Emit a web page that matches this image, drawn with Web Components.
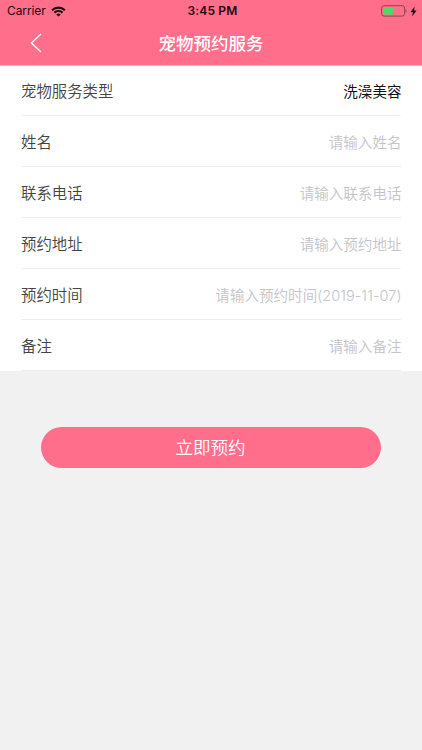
<!DOCTYPE html>
<html lang="zh-CN">
<head>
<meta charset="UTF-8">
<meta name="viewport" content="width=device-width, initial-scale=1">
<title>宠物预约服务</title>
<style>
    body {
        margin: 0;
        background: #f1f1f1;
        font-family: Inter, "Noto Sans CJK SC", sans-serif;
    }
</style>
</head>
<body>
<booking-page></booking-page>

<script>
class StatusBar extends HTMLElement {
    constructor() {
        super();
        this.attachShadow({mode: "open"}).innerHTML = `
        <style>
        :host {
            display: grid;
            grid-template-columns: 1fr auto 1fr;
            align-items: center;
            height: 22px;
            padding: 0 5px 0 7px;
            box-sizing: border-box;
            color: #1c0c10;
            font-size: 12px;
            line-height: 22px;
        }

        .left, .right {
            display: flex;
            align-items: center;
        }

        .left {
            gap: 5px;
            letter-spacing: -0.1px;
        }

        .right {
            justify-content: flex-end;
            gap: 3px;
        }

        .time {
            padding-left: 1px;
            font-weight: 600;
            letter-spacing: 0.15px;
        }

        svg {
            display: block;
        }
        </style>

        <div class="left">
            <span>Carrier</span>
            <svg width="15" height="11" viewBox="0 0 15 11" fill="none" stroke="#1c0c10" stroke-width="2.1">
                <path d="M1 4.2C4.7 .7 10.3 .7 14 4.2"/>
                <path d="M3.4 6.6C5.7 4.5 9.3 4.5 11.6 6.6"/>
                <path d="M7.5 10.6L5.2 8.4C6.5 7.3 8.5 7.3 9.8 8.4Z" fill="#1c0c10" stroke="none"/>
            </svg>
        </div>
        <span class="time">3:45 PM</span>
        <div class="right">
            <svg width="26" height="12" viewBox="0 0 26 12">
                <rect x=".6" y=".7" width="23" height="10.4" rx="2.4" fill="none" stroke="#8d4452"/>
                <rect x="2.2" y="2.3" width="10.3" height="7.2" rx=".8" fill="#4cd964"/>
                <path d="M24.6 4v4c1.4-.6 1.4-3.4 0-4z" fill="#8d4452"/>
            </svg>
            <svg width="7" height="11" viewBox="0 0 7 11">
                <path d="M4.6 .4L.4 6.2H3L2 10.6L6.6 4.6H4Z" fill="#1c0c10"/>
            </svg>
        </div>
        `;
    }
}

class NavBar extends HTMLElement {
    constructor() {
        super();
        this.attachShadow({mode: "open"}).innerHTML = `
        <style>
        :host {
            display: grid;
            grid-template-columns: 60px 1fr 60px;
            align-items: center;
            height: 43px;
            box-sizing: border-box;
            padding-bottom: 1px;
            color: white;
        }

        svg {
            display: block;
            margin-left: 30px;
        }

        h1 {
            margin: 0;
            padding-top: 1px;
            font-size: 17.5px;
            line-height: 26px;
            font-weight: 500;
            text-align: center;
        }
        </style>

        <svg width="12" height="20" viewBox="0 0 12 20" fill="none" stroke="white" stroke-width="1.4">
            <path d="M11 1L1.4 10L11 19"/>
        </svg>
        <h1><slot></slot></h1>
        `;
    }
}

class FormRow extends HTMLElement {
    connectedCallback() {
        this.attachShadow({mode: "open"}).innerHTML = `
        <style>
        :host {
            display: flex;
            justify-content: space-between;
            align-items: center;
            height: 51px;
            box-sizing: border-box;
            padding-top: 3px;
            border-bottom: 1px solid #eeeeee;
            line-height: 24px;
        }

        :host(:first-child) {
            height: 50px;
        }

        .label {
            color: #444444;
            font-size: 15.4px;
            font-weight: 350;
        }

        .value {
            margin-right: -0.5px;
            color: #c4c4ca;
            font-size: 14.5px;
            font-weight: 350;
            letter-spacing: 0.05px;
        }

        .value.filled {
            color: #111111;
            font-weight: 400;
        }
        </style>

        <span class="label">${this.getAttribute("label")}</span>
        <span class="value ${this.hasAttribute("filled") ? "filled" : ""}"><slot></slot></span>
        `;
    }
}

class SubmitButton extends HTMLElement {
    constructor() {
        super();
        this.attachShadow({mode: "open"}).innerHTML = `
        <style>
        :host {
            display: block;
            margin: 56px 41px 0;
        }

        button {
            display: block;
            width: 100%;
            height: 41px;
            padding: 0 1px 2px 0;
            border: 0;
            border-radius: 21px;
            background: #ff6e8b;
            color: white;
            font: inherit;
            font-size: 17.5px;
            font-weight: 350;
        }
        </style>

        <button type="button"><slot></slot></button>
        `;
    }
}

class BookingPage extends HTMLElement {
    constructor() {
        super();
        this.attachShadow({mode: "open"}).innerHTML = `
        <style>
        :host {
            display: block;
            min-height: 100vh;
        }

        header {
            background: #ff6e8b;
            border-bottom: 1px solid #ffb0c0;
        }

        .form {
            padding: 0 21px;
            background: white;
        }
        </style>

        <header>
            <status-bar></status-bar>
            <nav-bar>宠物预约服务</nav-bar>
        </header>
        <div class="form">
            <form-row label="宠物服务类型" filled>洗澡美容</form-row>
            <form-row label="姓名">请输入姓名</form-row>
            <form-row label="联系电话">请输入联系电话</form-row>
            <form-row label="预约地址">请输入预约地址</form-row>
            <form-row label="预约时间">请输入预约时间(2019-11-07)</form-row>
            <form-row label="备注">请输入备注</form-row>
        </div>
        <submit-button>立即预约</submit-button>
        `;
    }
}

customElements.define("status-bar", StatusBar);
customElements.define("nav-bar", NavBar);
customElements.define("form-row", FormRow);
customElements.define("submit-button", SubmitButton);
customElements.define("booking-page", BookingPage);
</script>
</body>
</html>
